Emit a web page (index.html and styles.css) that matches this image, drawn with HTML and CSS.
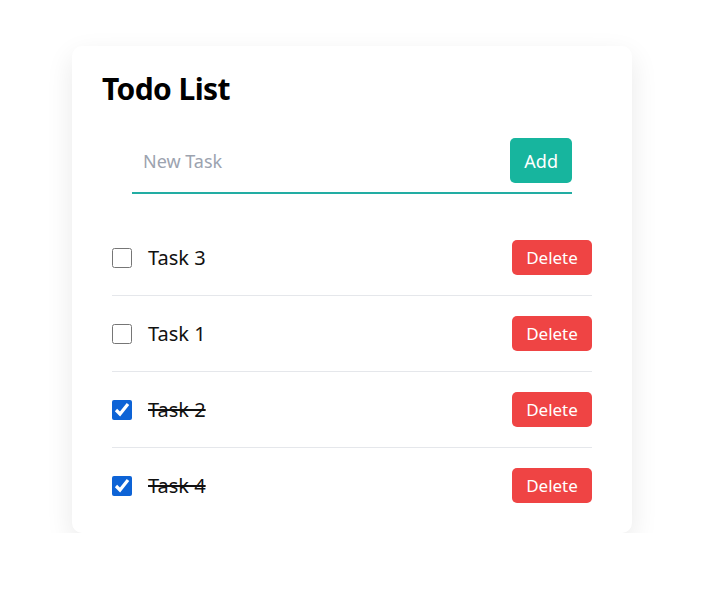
FILE: index.html
```html
<!DOCTYPE html>
<html lang="en">
<head>
<meta charset="utf-8">
<title>Todo List</title>
<link rel="stylesheet" href="styles.css">
</head>
<body>
<div class="page">
  <div class="card">
    <h1 class="title">Todo List</h1>
    <form class="add-form">
      <input class="add-input" type="text" placeholder="New Task">
      <button class="add-btn" type="button">Add</button>
    </form>
    <ul class="list">
      <li class="item">
        <input class="check" type="checkbox">
        <span class="label">Task 3</span>
        <button class="del-btn" type="button">Delete</button>
      </li>
      <li class="item">
        <input class="check" type="checkbox">
        <span class="label">Task 1</span>
        <button class="del-btn" type="button">Delete</button>
      </li>
      <li class="item">
        <input class="check" type="checkbox" checked>
        <span class="label done">Task 2</span>
        <button class="del-btn" type="button">Delete</button>
      </li>
      <li class="item">
        <input class="check" type="checkbox" checked>
        <span class="label done">Task 4</span>
        <button class="del-btn" type="button">Delete</button>
      </li>
    </ul>
  </div>
</div>
</body>
</html>
```
FILE: styles.css
```css
html, body {
  margin: 0;
  padding: 0;
  background: #ffffff;
}
body {
  font-family: "Noto Sans", "Open Sans", Arial, sans-serif;
  color: #111111;
}
.page {
  display: flex;
  justify-content: center;
  padding: 46px 0 0 2px;
}
.card {
  width: 560px;
  box-sizing: border-box;
  padding: 23px 30px 10px;
  background: #ffffff;
  border-radius: 10px;
  box-shadow: 0 10px 28px rgba(0, 0, 0, 0.09);
}
.title {
  margin: 0;
  font-size: 30px;
  line-height: 40px;
  font-weight: 700;
  letter-spacing: -0.6px;
  color: #000000;
}
.add-form {
  width: 440px;
  margin: 29px auto 0;
  display: flex;
  align-items: center;
  padding-bottom: 9px;
  border-bottom: 2px solid #22ada3;
}
.add-input {
  flex: 1;
  min-width: 0;
  border: none;
  outline: none;
  padding: 0 11px;
  font-family: inherit;
  font-size: 18px;
  color: #111111;
  background: transparent;
}
.add-input::placeholder {
  color: #9ca3af;
}
.add-btn {
  height: 45px;
  padding: 0 14px;
  border: none;
  border-radius: 5px;
  background: #17b59e;
  color: #ffffff;
  font-family: inherit;
  font-size: 18px;
  cursor: pointer;
}
.list {
  list-style: none;
  width: 480px;
  margin: 26px auto 0;
  padding: 0;
}
.item {
  display: flex;
  align-items: center;
  padding: 20px 0;
  border-bottom: 1px solid #e5e7eb;
}
.item:last-child {
  border-bottom: none;
}
.check {
  width: 20px;
  height: 20px;
  margin: 0 16px 0 0;
  accent-color: #0d63d6;
}
.label {
  flex: 1;
  font-size: 20px;
  color: #111111;
}
.label.done {
  text-decoration: line-through;
}
.del-btn {
  width: 80px;
  height: 35px;
  border: none;
  border-radius: 5px;
  background: #ef4444;
  color: #ffffff;
  font-family: inherit;
  font-size: 17px;
  cursor: pointer;
}
```
